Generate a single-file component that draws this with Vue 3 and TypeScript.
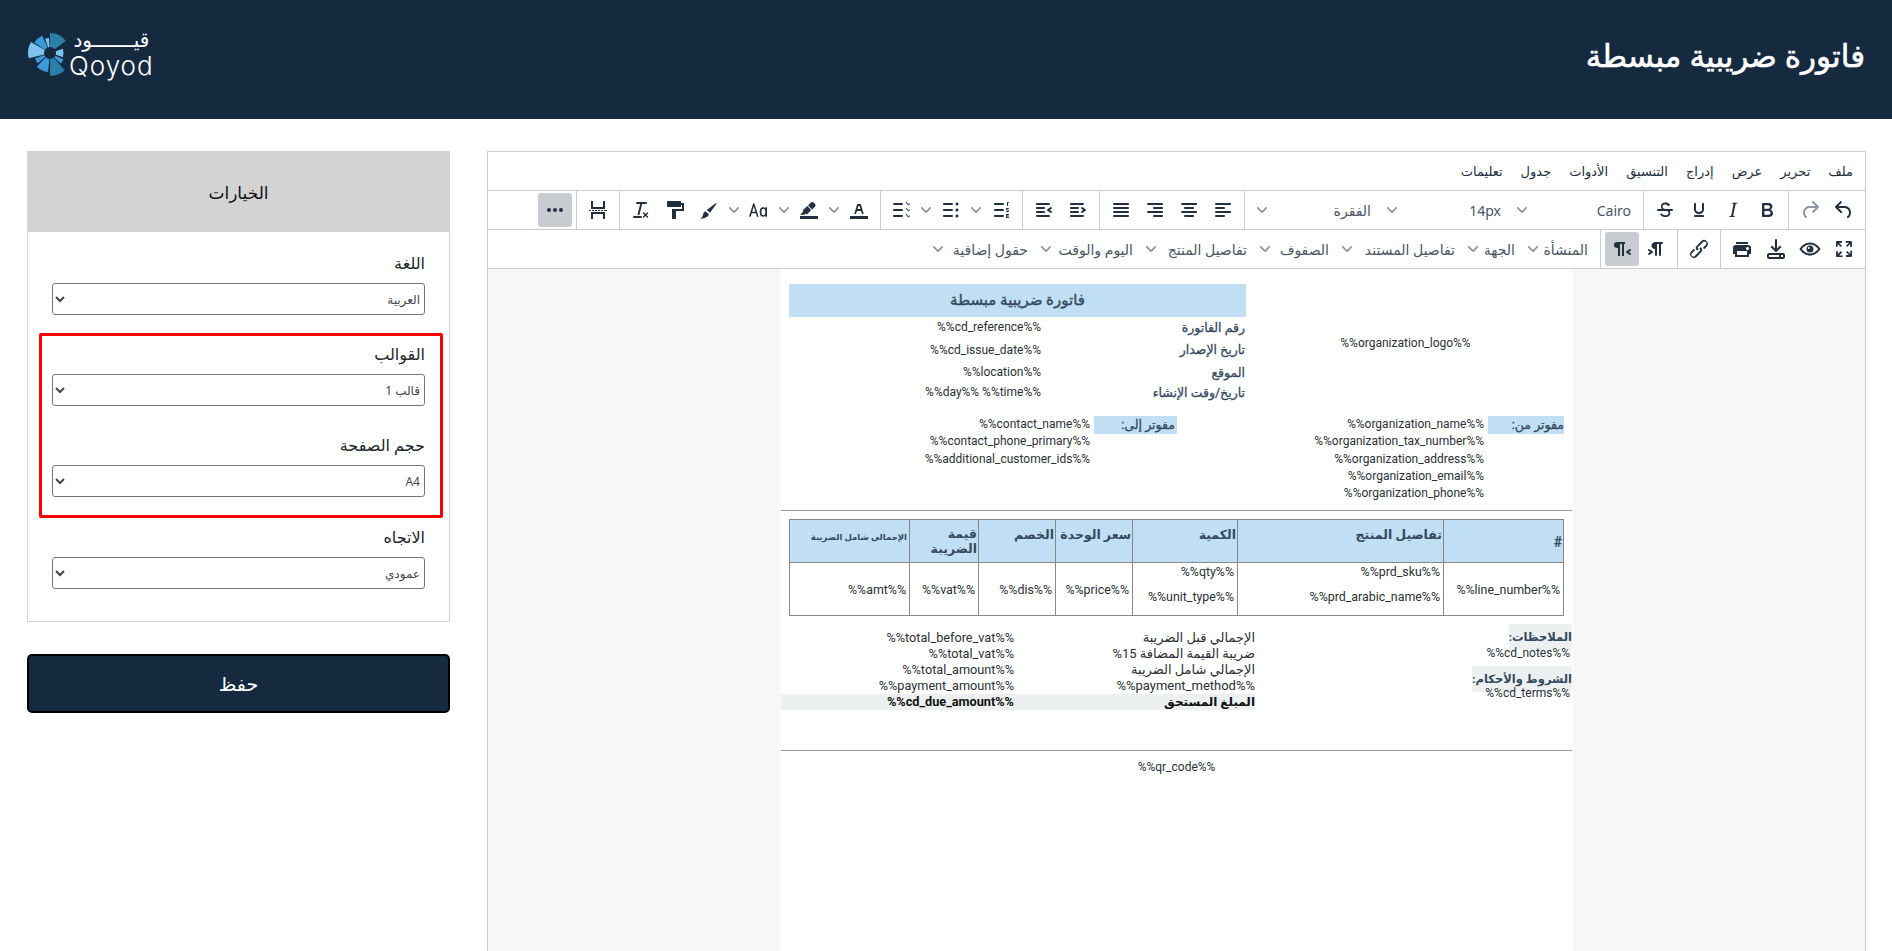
<script setup lang="ts">
interface Tool { icon: string; flip?: boolean; chev?: boolean; off?: boolean; on?: boolean }
const P: Record<string, string> = {
  undo: 'M6.4 8H12c3.7 0 6.2 2 6.8 5.1.6 2.7-.4 5.6-2.3 6.8a1 1 0 0 1-1-1.8c1.1-.6 1.8-2.7 1.4-4.6-.5-2.1-2.1-3.5-4.9-3.5H6.4l3.3 3.3a1 1 0 1 1-1.4 1.4l-5-5a1 1 0 0 1 0-1.4l5-5a1 1 0 0 1 1.4 1.4L6.4 8z',
  redo: 'M17.6 10H12c-2.8 0-4.4 1.4-4.9 3.5-.4 2 .3 4 1.4 4.6a1 1 0 1 1-1 1.8c-2-1.2-2.9-4.1-2.3-6.8.6-3 3-5.1 6.8-5.1h5.6l-3.3-3.3a1 1 0 1 1 1.4-1.4l5 5a1 1 0 0 1 0 1.4l-5 5a1 1 0 0 1-1.4-1.4l3.3-3.3z',
  bold: 'M7.8 19c-.3 0-.5 0-.6-.2l-.2-.5V5.7c0-.2 0-.4.2-.5l.6-.2h5c1.5 0 2.7.3 3.5 1 .7.6 1.1 1.4 1.1 2.5a3 3 0 0 1-.6 1.9c-.4.6-1 1-1.6 1.2.4.1.9.3 1.3.6s.8.7 1 1.2c.4.4.5 1 .5 1.6 0 1.3-.4 2.3-1.3 3-.8.7-2.1 1-3.8 1H7.8zm5-8.3c.6 0 1.2-.1 1.6-.5.4-.3.6-.7.6-1.3 0-1.1-.8-1.7-2.3-1.7H9.3v3.5h3.4zm.5 6c.7 0 1.3-.1 1.7-.4.4-.4.6-.9.6-1.5s-.2-1-.7-1.4c-.4-.3-1-.4-2-.4H9.4v3.8h4z',
  italic: 'M16.7 4.7l-.1.9h-.3c-.6 0-1 0-1.4.3-.3.3-.4.6-.5 1.1l-2.1 9.8v.6c0 .5.4.8 1.4.8h.2l-.2.8H8l.2-.8h.2c1.1 0 1.8-.5 2-1.5l2-9.8.1-.5c0-.6-.4-.8-1.4-.8h-.3l.2-.9h5.8z',
  underline: 'M16 5c.6 0 1 .4 1 1v5.5a4 4 0 0 1-.4 1.8l-1 1.4a5.3 5.3 0 0 1-5.5 1 5 5 0 0 1-1.6-1c-.5-.4-.8-.9-1.1-1.4a4 4 0 0 1-.4-1.8V6c0-.6.4-1 1-1s1 .4 1 1v5.5c0 .3 0 .6.2 1l.6.7a3.3 3.3 0 0 0 2.2.8 3.4 3.4 0 0 0 2.2-.8c.3-.2.4-.5.6-.8l.2-.9V6c0-.6.4-1 1-1zM8 17h8c.6 0 1 .4 1 1s-.4 1-1 1H8a1 1 0 0 1 0-2z',
  strike: 'M15.6 8.5c-.5-.7-1-1.1-1.3-1.3-.6-.4-1.3-.6-2-.6-2.7 0-2.8 1.7-2.8 2.1 0 1.6 1.8 2 3.2 2.3 4.4.9 4.6 2.8 4.6 3.9 0 1.4-.7 4.1-5 4.1A6.2 6.2 0 0 1 7 16.4l1.5-1.1c.4.6 1.6 2 3.7 2 1.6 0 2.5-.4 3-1 .3-.4.4-.9.4-1.5 0-1.6-2-2-3.3-2.3-1.8-.4-4.4-1-4.4-3.9 0-2.4 1.8-4 4.6-4 1.5 0 2.7.5 3.5 1.1.4.3.9.8 1.2 1.3l-1.6 1zM5 11h14a1 1 0 0 1 0 2H5a1 1 0 0 1 0-2z',
  alignLeft: 'M5 5h14c.6 0 1 .4 1 1s-.4 1-1 1H5a1 1 0 1 1 0-2zm0 4h8c.6 0 1 .4 1 1s-.4 1-1 1H5a1 1 0 1 1 0-2zm0 8h8c.6 0 1 .4 1 1s-.4 1-1 1H5a1 1 0 0 1 0-2zm0-4h14c.6 0 1 .4 1 1s-.4 1-1 1H5a1 1 0 0 1 0-2z',
  alignCenter: 'M5 5h14c.6 0 1 .4 1 1s-.4 1-1 1H5a1 1 0 1 1 0-2zm3 4h8c.6 0 1 .4 1 1s-.4 1-1 1H8a1 1 0 1 1 0-2zm0 8h8c.6 0 1 .4 1 1s-.4 1-1 1H8a1 1 0 0 1 0-2zm-3-4h14c.6 0 1 .4 1 1s-.4 1-1 1H5a1 1 0 0 1 0-2z',
  alignRight: 'M5 5h14c.6 0 1 .4 1 1s-.4 1-1 1H5a1 1 0 1 1 0-2zm6 4h8c.6 0 1 .4 1 1s-.4 1-1 1h-8a1 1 0 0 1 0-2zm0 8h8c.6 0 1 .4 1 1s-.4 1-1 1h-8a1 1 0 0 1 0-2zm-6-4h14c.6 0 1 .4 1 1s-.4 1-1 1H5a1 1 0 0 1 0-2z',
  justify: 'M5 5h14c.6 0 1 .4 1 1s-.4 1-1 1H5a1 1 0 1 1 0-2zm0 4h14c.6 0 1 .4 1 1s-.4 1-1 1H5a1 1 0 1 1 0-2zm0 4h14c.6 0 1 .4 1 1s-.4 1-1 1H5a1 1 0 0 1 0-2zm0 4h14c.6 0 1 .4 1 1s-.4 1-1 1H5a1 1 0 0 1 0-2z',
  outdent: 'M7 5h12c.6 0 1 .4 1 1s-.4 1-1 1H7a1 1 0 1 1 0-2zm5 4h7c.6 0 1 .4 1 1s-.4 1-1 1h-7a1 1 0 0 1 0-2zm0 4h7c.6 0 1 .4 1 1s-.4 1-1 1h-7a1 1 0 0 1 0-2zm-5 4h12a1 1 0 0 1 0 2H7a1 1 0 0 1 0-2zm1.6-3.8a1 1 0 0 1-1.2 1.6l-3-2a1 1 0 0 1 0-1.6l3-2a1 1 0 0 1 1.2 1.6L6.8 12l1.8 1.2z',
  indent: 'M7 5h12c.6 0 1 .4 1 1s-.4 1-1 1H7a1 1 0 1 1 0-2zm5 4h7c.6 0 1 .4 1 1s-.4 1-1 1h-7a1 1 0 0 1 0-2zm0 4h7c.6 0 1 .4 1 1s-.4 1-1 1h-7a1 1 0 0 1 0-2zm-5 4h12a1 1 0 0 1 0 2H7a1 1 0 0 1 0-2zm-2.6-3.8L6.2 12l-1.8-1.2a1 1 0 0 1 1.2-1.6l3 2a1 1 0 0 1 0 1.6l-3 2a1 1 0 1 1-1.2-1.6z',
  num: 'M10 17h8c.6 0 1 .4 1 1s-.4 1-1 1h-8a1 1 0 0 1 0-2zm0-6h8c.6 0 1 .4 1 1s-.4 1-1 1h-8a1 1 0 0 1 0-2zm0-6h8c.6 0 1 .4 1 1s-.4 1-1 1h-8a1 1 0 1 1 0-2zM6 4v3.5c0 .3-.2.5-.5.5a.5.5 0 0 1-.5-.5V5h-.5a.5.5 0 0 1 0-1H6zm-1 8.8l.2.2h1.3c.3 0 .5.2.5.5s-.2.5-.5.5H4.9a1 1 0 0 1-.9-1V13c0-.4.3-.8.6-1l1.2-.4.2-.3a.2.2 0 0 0-.2-.2H4.5a.5.5 0 0 1-.5-.5c0-.3.2-.5.5-.5h1.6c.5 0 .9.4.9 1v.1c0 .4-.3.8-.6 1l-1.2.4-.2.3zM7 17v2c0 .6-.4 1-1 1H4.5a.5.5 0 0 1 0-1h1.2c.2 0 .3-.1.3-.3 0-.2-.1-.3-.3-.3H4.4a.4.4 0 1 1 0-.8h1.3c.2 0 .3-.1.3-.3 0-.2-.1-.3-.3-.3H4.5a.5.5 0 1 1 0-1H6c.6 0 1 .4 1 1z',
  bull: 'M11 5h8c.6 0 1 .4 1 1s-.4 1-1 1h-8a1 1 0 0 1 0-2zm0 6h8c.6 0 1 .4 1 1s-.4 1-1 1h-8a1 1 0 0 1 0-2zm0 6h8c.6 0 1 .4 1 1s-.4 1-1 1h-8a1 1 0 0 1 0-2zM4.5 6c0-.4.1-.8.4-1 .3-.4.7-.5 1.1-.5.4 0 .8.1 1 .4.4.3.5.7.5 1.1 0 .4-.1.8-.4 1-.3.4-.7.5-1.1.5-.4 0-.8-.1-1-.4-.4-.3-.5-.7-.5-1.1zm0 6c0-.4.1-.8.4-1 .3-.4.7-.5 1.1-.5.4 0 .8.1 1 .4.4.3.5.7.5 1.1 0 .4-.1.8-.4 1-.3.4-.7.5-1.1.5-.4 0-.8-.1-1-.4-.4-.3-.5-.7-.5-1.1zm0 6c0-.4.1-.8.4-1 .3-.4.7-.5 1.1-.5.4 0 .8.1 1 .4.4.3.5.7.5 1.1 0 .4-.1.8-.4 1-.3.4-.7.5-1.1.5-.4 0-.8-.1-1-.4-.4-.3-.5-.7-.5-1.1z',
  check: 'M11 17h8c.6 0 1 .4 1 1s-.4 1-1 1h-8a1 1 0 0 1 0-2zm0-6h8c.6 0 1 .4 1 1s-.4 1-1 1h-8a1 1 0 0 1 0-2zm0-6h8a1 1 0 0 1 0 2h-8a1 1 0 0 1 0-2zM3.6 5.3l1 1 2.2-2.5.6.6-2.8 3.1-1.6-1.6zm0 6l1 1 2.2-2.5.6.6-2.8 3.1-1.6-1.6zm0 6l1 1 2.2-2.5.6.6-2.8 3.1-1.6-1.6z',
  textColor: 'M3 18h18v3H3zM8.7 16h-.8a.5.5 0 0 1-.5-.6l2.7-9c.1-.3.3-.4.5-.4h2.8c.2 0 .4.1.5.4l2.7 9a.5.5 0 0 1-.5.6h-.8a.5.5 0 0 1-.4-.4l-.7-2.2c0-.3-.3-.4-.5-.4h-3.4c-.2 0-.4.1-.5.4l-.7 2.2c0 .3-.2.4-.4.4zm2.6-7.6l-.6 2a.5.5 0 0 0 .5.6h1.6a.5.5 0 0 0 .5-.6l-.6-2c0-.3-.3-.4-.5-.4h-.4c-.2 0-.4.1-.5.4z',
  highlight: 'M3 18h18v3H3zM7.7 16.7H3l3.3-3.3-.7-.8L10.2 8l4 4.1-4 4.2c-.2.2-.6.2-.8 0l-.6-.7-1.1 1.1zm5-7.5L11 7.4l3-2.9a2 2 0 0 1 2.6 0L18 6c.7.7.7 2 0 2.7l-2.9 2.9-1.8-1.8-.5-.6',
  aa: 'M18.4 18.2v-.6c-.5.8-1.3 1.2-2.4 1.2-2.2 0-3.3-1.6-3.3-4.8 0-3.1 1-4.7 3.3-4.7 1.1 0 1.8.3 2.4 1.1v-.6c0-.5.4-.8.8-.8s.8.3.8.8v8.4c0 .5-.4.8-.8.8a.8.8 0 0 1-.8-.8zm-2-7.4c-1.3 0-1.9 1.1-1.9 3.2 0 2.2.6 3.3 1.9 3.3 1.3 0 1.9-1.1 1.9-3.3 0-2.1-.6-3.2-1.9-3.2zM11.5 18.2a.8.8 0 0 1-1.6.2l-1-3.1H4.7l-1 3.1a.8.8 0 0 1-1.5-.5L6 5.9c.1-.5.5-.7.8-.7s.7.2.8.7l3.8 12.3zM8.4 13.7L6.8 8.3l-1.6 5.4h3.2z',
  brush: 'M3 20.6c1.9-.7 2.5-1.8 2.9-3.3.4-1.5.8-3.1 2.6-4l3.4 3c-.6 2.4-4 4.6-8.9 4.3zM13 14.8l-3.2-2.7 9.2-7.2.7.7-6.7 9.2z',
  painter: 'M18 5V4c0-.5-.4-1-1-1H5a1 1 0 0 0-1 1v4c0 .6.5 1 1 1h12c.6 0 1-.4 1-1V7h1v4H9v9c0 .6.4 1 1 1h2c.6 0 1-.4 1-1v-7h8V5h-3z',
  clear: 'M13.2 6l-2.6 10.2a1 1 0 0 1-1 .8h-.2a.8.8 0 0 1-.8-1l2.6-10H8a1 1 0 1 1 0-2h9a1 1 0 0 1 0 2h-3.8zM5 18h7a1 1 0 0 1 0 2H5a1 1 0 0 1 0-2zm13 1.5L16.5 18 15 19.5a.7.7 0 0 1-1-1l1.5-1.5-1.5-1.5a.7.7 0 0 1 1-1l1.5 1.5 1.5-1.5a.7.7 0 0 1 1 1L17.5 17l1.5 1.5a.7.7 0 0 1-1 1z',
  pageBreak: 'M5 3h2v6h10V3h2v8H5V3zM5 21v-7h14v7h-2v-5H7v5H5zM3 12h2v1H3zm3 0h2v1H6zm3 0h2v1H9zm3 0h2v1h-2zm3 0h2v1h-2zm3 0h3v1h-3z',
  more: 'M6 10a2 2 0 0 0-2 2c0 1.1.9 2 2 2a2 2 0 0 0 2-2 2 2 0 0 0-2-2zm12 0a2 2 0 0 0-2 2c0 1.1.9 2 2 2a2 2 0 0 0 2-2 2 2 0 0 0-2-2zm-6 0a2 2 0 0 0-2 2c0 1.1.9 2 2 2a2 2 0 0 0 2-2 2 2 0 0 0-2-2z',
  full: 'M15.3 10l-1.2-1.3 2.9-3h-2.3a.9.9 0 1 1 0-1.7H19c.5 0 .9.4.9.9v4.4a.9.9 0 1 1-1.8 0V7l-2.9 3zm0 4l3 3v-2.3a.9.9 0 1 1 1.7 0V19c0 .5-.4.9-.9.9h-4.4a.9.9 0 1 1 0-1.8H17l-3-2.9 1.3-1.2zM10 15.4l-2.9 3h2.3a.9.9 0 1 1 0 1.7H5a.9.9 0 0 1-.9-.9v-4.4a.9.9 0 1 1 1.8 0V17l2.9-3 1.2 1.3zM8.7 10L5.7 7v2.3a.9.9 0 0 1-1.7 0V5c0-.5.4-.9.9-.9h4.4a.9.9 0 0 1 0 1.8H7l3 2.9-1.3 1.2z',
  eye: 'M12 5.5c4.4 0 8.2 2.9 10.6 6.5-2.4 3.6-6.2 6.5-10.6 6.5S3.8 15.6 1.4 12C3.8 8.4 7.6 5.5 12 5.5zm0 2c-3.3 0-6.2 1.9-8.2 4.5 2 2.6 4.9 4.5 8.2 4.5s6.2-1.9 8.2-4.5c-2-2.6-4.9-4.5-8.2-4.5zm0 1a3.5 3.5 0 1 1 0 7 3.5 3.5 0 0 1 0-7zm-1.2 1.4a1 1 0 1 0 0 2 1 1 0 0 0 0-2z',
  save: 'M5 16h14a2 2 0 0 1 2 2v2a2 2 0 0 1-2 2H5a2 2 0 0 1-2-2v-2c0-1.1.9-2 2-2zm0 2v2h14v-2H5zm10 0h2v2h-2v-2zm-4-6.4L8.7 9.3a1 1 0 1 0-1.4 1.4l4 4c.4.4 1 .4 1.4 0l4-4a1 1 0 1 0-1.4-1.4L13 11.6V3a1 1 0 0 0-2 0v8.6z',
  print: 'M18 8H6a3 3 0 0 0-3 3v6h2v3h14v-3h2v-6a3 3 0 0 0-3-3zm-1 10H7v-4h10v4zm.5-5c-.8 0-1.5-.7-1.5-1.5s.7-1.5 1.5-1.5 1.5.7 1.5 1.5-.7 1.5-1.5 1.5zm.5-8H6v2h12V5z',
  link: 'M6.2 12.3a1 1 0 0 1 1.4 1.4l-2.1 2.1a2 2 0 1 0 2.7 2.7l4.8-4.8a1 1 0 0 0 0-1.4 1 1 0 1 1 1.4-1.3 2.9 2.9 0 0 1 0 4L9.6 20a3.9 3.9 0 0 1-5.5-5.5l2-2zm11.6-.6a1 1 0 0 1-1.4-1.4l2-2a2 2 0 1 0-2.6-2.8L11 10a1 1 0 0 0 0 1.4A1 1 0 1 1 9.6 13a2.9 2.9 0 0 1 0-4L14.4 4a3.9 3.9 0 0 1 5.5 5.5l-2 2z',
  ltr: 'M11 5h7a1 1 0 0 1 0 2h-1v11a1 1 0 0 1-2 0V7h-2v11a1 1 0 0 1-2 0v-6c-.5 0-1 0-1.4-.3A3.4 3.4 0 0 1 7.8 10a3.3 3.3 0 0 1 0-2.8 3.4 3.4 0 0 1 1.8-1.8L11 5zM4.4 16.2L6.2 15l-1.8-1.2a1 1 0 0 1 1.2-1.6l3 2a1 1 0 0 1 0 1.6l-3 2a1 1 0 1 1-1.2-1.6z',
  rtl: 'M7 5h8v2h-1v12h-2V7h-2v12H8v-8H7a3 3 0 1 1 0-6zM20.6 13.8L18.8 15l1.8 1.2a1 1 0 0 1-1.2 1.6l-3-2a1 1 0 0 1 0-1.6l3-2a1 1 0 0 1 1.2 1.6z',
}
const chevron = 'M8.7 2.2c.3-.3.8-.3 1 0 .4.4.4.9 0 1.2L5.7 7.8c-.3.3-.9.3-1.2 0L.2 3.4a.8.8 0 0 1 0-1.2c.3-.3.8-.3 1.1 0L5 6l3.7-3.8z'

const menu = ['ملف', 'تحرير', 'عرض', 'إدراج', 'التنسيق', 'الأدوات', 'جدول', 'تعليمات']
const history: Tool[] = [{ icon: 'undo' }, { icon: 'redo', off: true }]
const marks: Tool[] = [{ icon: 'bold' }, { icon: 'italic' }, { icon: 'underline' }, { icon: 'strike' }]
const selects = ['Cairo', '14px', 'الفقرة']
const aligns: Tool[] = [{ icon: 'alignLeft' }, { icon: 'alignCenter' }, { icon: 'alignRight' }, { icon: 'justify' }]
const indents: Tool[] = [{ icon: 'outdent', flip: true }, { icon: 'indent', flip: true }]
const lists: Tool[] = [{ icon: 'num', flip: true, chev: true }, { icon: 'bull', flip: true, chev: true }, { icon: 'check', flip: true }]
const styles: Tool[] = [
  { icon: 'textColor', chev: true }, { icon: 'highlight', chev: true }, { icon: 'aa', chev: true },
  { icon: 'brush' }, { icon: 'painter' }, { icon: 'clear' },
]
const row1: Tool[][] = [aligns, indents, lists, styles, [{ icon: 'pageBreak' }], [{ icon: 'more', on: true }]]
const row2: Tool[][] = [
  [{ icon: 'full' }, { icon: 'eye' }, { icon: 'save' }, { icon: 'print' }],
  [{ icon: 'link' }],
  [{ icon: 'ltr' }, { icon: 'rtl', on: true }],
]
const fields = [
  { text: 'المنشأة', w: 73 }, { text: 'الجهة', w: 60 }, { text: 'تفاصيل المستند', w: 126 }, { text: 'الصفوف', w: 82 },
  { text: 'تفاصيل المنتج', w: 114 }, { text: 'اليوم والوقت', w: 105 }, { text: 'حقول إضافية', w: 108 },
]

const meta = [
  ['رقم الفاتورة', '%%cd_reference%%'],
  ['تاريخ الإصدار', '%%cd_issue_date%%'],
  ['الموقع', '%%location%%'],
  ['تاريخ/وقت الإنشاء', '%%day%% %%time%%'],
]
const fromRows = ['%%organization_name%%', '%%organization_tax_number%%', '%%organization_address%%', '%%organization_email%%', '%%organization_phone%%']
const toRows = ['%%contact_name%%', '%%contact_phone_primary%%', '%%additional_customer_ids%%']
const totals = [
  ['الإجمالي قبل الضريبة', '%%total_before_vat%%'],
  ['ضريبة القيمة المضافة 15%', '%%total_vat%%'],
  ['الإجمالي شامل الضريبة', '%%total_amount%%'],
  ['%%payment_method%%', '%%payment_amount%%'],
]

function wedge(a: number, b: number, r: number, r0: number): string {
  const pt = (deg: number, rad: number) => {
    const t = ((deg - 90) * Math.PI) / 180
    return `${(24 + rad * Math.cos(t)).toFixed(2)} ${(24 + rad * Math.sin(t)).toFixed(2)}`
  }
  return `M${pt(a, r0)}L${pt(a, r)}A${r} ${r} 0 0 1 ${pt(b, r)}L${pt(b, r0)}A${r0} ${r0} 0 0 0 ${pt(a, r0)}Z`
}
const wedges = [
  { d: wedge(0, 52, 20, 6), c: '#2a7fa8' },
  { d: wedge(72, 108, 13.5, 6), c: '#7cc4ee' },
  { d: wedge(116, 134, 15, 6), c: '#3b9bd9' },
  { d: wedge(140, 180, 23, 6), c: '#2a7fa8' },
  { d: wedge(186, 224, 19, 6), c: '#3b9bd9' },
  { d: wedge(230, 250, 16, 6), c: '#3b9bd9' },
  { d: wedge(256, 300, 22, 6), c: '#7cc4ee' },
  { d: wedge(304, 336, 19, 6), c: '#3b9bd9' },
  { d: wedge(341, 356, 15, 6), c: '#7cc4ee' },
]
</script>

<template>
  <div class="app" dir="rtl">
    <header class="top">
      <h1 class="page-title">فاتورة ضريبية مبسطة</h1>
      <div class="logo" dir="ltr">
        <svg class="logo-mark" viewBox="0 0 48 48" width="48" height="48">
          <path v-for="(w, i) in wedges" :key="i" :d="w.d" :fill="w.c" />
        </svg>
        <div class="logo-text">
          <span class="logo-ar" dir="rtl">قيـــــــود</span>
          <span class="logo-en">Qoyod</span>
        </div>
      </div>
    </header>

    <main class="body">
      <section class="editor">
        <nav class="menubar">
          <span v-for="m in menu" :key="m" class="menu-item">{{ m }}</span>
        </nav>

        <div class="toolbar">
          <div class="group">
            <button v-for="t in history" :key="t.icon" class="tbtn" type="button">
              <svg viewBox="0 0 24 24" :class="{ off: t.off }"><path :d="P[t.icon]" /></svg>
            </button>
          </div>
          <div class="group">
            <button v-for="t in marks" :key="t.icon" class="tbtn" type="button">
              <svg viewBox="0 0 24 24"><path :d="P[t.icon]" /></svg>
            </button>
          </div>
          <div class="group">
            <div v-for="s in selects" :key="s" class="tselect">
              <span class="tselect-label">{{ s }}</span>
              <svg class="chev" viewBox="0 0 10 10"><path :d="chevron" /></svg>
            </div>
          </div>
          <div v-for="(g, gi) in row1" :key="gi" class="group group-tight">
            <template v-for="t in g" :key="t.icon">
              <button class="tbtn" :class="{ on: t.on }" type="button">
                <svg viewBox="0 0 24 24" :class="{ flip: t.flip }"><path fill-rule="evenodd" :d="P[t.icon]" /></svg>
              </button>
              <span v-if="t.chev" class="tchev">
                <svg class="chev" viewBox="0 0 10 10"><path :d="chevron" /></svg>
              </span>
            </template>
          </div>
        </div>

        <div class="toolbar">
          <div v-for="(g, gi) in row2" :key="gi" class="group">
            <button v-for="t in g" :key="t.icon" class="tbtn" :class="{ on: t.on }" type="button">
              <svg viewBox="0 0 24 24"><path fill-rule="evenodd" :d="P[t.icon]" /></svg>
            </button>
          </div>
          <div class="group group-plain">
            <div v-for="f in fields" :key="f.text" class="tmenu" :style="{ width: f.w + 'px' }">
              <span>{{ f.text }}</span>
              <svg class="chev" viewBox="0 0 10 10"><path :d="chevron" /></svg>
            </div>
          </div>
        </div>

        <div class="doc">
          <article class="sheet">
            <div class="head">
              <div class="org-logo">%%organization_logo%%</div>
              <div class="head-main">
                <div class="doc-title">فاتورة ضريبية مبسطة</div>
                <div class="meta">
                  <template v-for="r in meta" :key="r[0]">
                    <span class="meta-label">{{ r[0] }}</span>
                    <span class="meta-value" dir="ltr">{{ r[1] }}</span>
                  </template>
                </div>
              </div>
            </div>

            <div class="parties">
              <div class="party party-from">
                <span class="party-label">مفوتر من:</span>
                <div class="party-rows">
                  <div v-for="r in fromRows" :key="r">{{ r }}</div>
                </div>
              </div>
              <div class="party party-to">
                <span class="party-label party-label-to">مفوتر إلى:</span>
                <div class="party-rows">
                  <div v-for="r in toRows" :key="r">{{ r }}</div>
                </div>
              </div>
            </div>

            <hr class="rule" />

            <table class="lines">
              <colgroup>
                <col class="c1" /><col class="c2" /><col class="c3" /><col class="c4" />
                <col class="c5" /><col class="c6" /><col class="c7" />
              </colgroup>
              <thead>
                <tr>
                  <th class="hash">#</th>
                  <th class="up">تفاصيل المنتج</th>
                  <th class="up">الكمية</th>
                  <th class="up">سعر الوحدة</th>
                  <th class="up">الخصم</th>
                  <th class="two">قيمة الضريبة</th>
                  <th class="tiny">الإجمالي شامل الضريبة</th>
                </tr>
              </thead>
              <tbody>
                <tr>
                  <td>%%line_number%%</td>
                  <td class="stack"><p>%%prd_sku%%</p><p>%%prd_arabic_name%%</p></td>
                  <td class="stack"><p>%%qty%%</p><p>%%unit_type%%</p></td>
                  <td>%%price%%</td>
                  <td>%%dis%%</td>
                  <td>%%vat%%</td>
                  <td>%%amt%%</td>
                </tr>
              </tbody>
            </table>

            <div class="foot">
              <div class="notes">
                <div class="note-label">الملاحظات:</div>
                <div class="note-value">%%cd_notes%%</div>
                <div class="note-label note-label-2">الشروط والأحكام:</div>
                <div class="note-value note-value-2">%%cd_terms%%</div>
              </div>
              <div class="totals">
                <div v-for="r in totals" :key="r[1]" class="total-row">
                  <span class="total-label">{{ r[0] }}</span>
                  <span class="total-value">{{ r[1] }}</span>
                </div>
                <div class="total-row total-due">
                  <span class="total-label">المبلغ المستحق</span>
                  <span class="total-value">%%cd_due_amount%%</span>
                </div>
              </div>
            </div>

            <hr class="rule rule-2" />
            <div class="qr">%%qr_code%%</div>
          </article>
        </div>
      </section>

      <aside class="side">
        <div class="card">
          <div class="card-head">الخيارات</div>
          <div class="card-body">
            <label class="field">
              <span class="field-label">اللغة</span>
              <select class="input"><option>العربية</option></select>
            </label>
            <div class="marked">
              <label class="field">
                <span class="field-label">القوالب</span>
                <select class="input"><option>قالب 1</option></select>
              </label>
              <label class="field field-next">
                <span class="field-label">حجم الصفحة</span>
                <select class="input"><option>A4</option></select>
              </label>
            </div>
            <label class="field field-last">
              <span class="field-label">الاتجاه</span>
              <select class="input"><option>عمودي</option></select>
            </label>
          </div>
        </div>
        <button class="save" type="button">حفظ</button>
      </aside>
    </main>
  </div>
</template>

<style>
html, body { margin: 0; background: #fff; }
</style>

<style scoped>
.app {
  height: 100vh;
  overflow: hidden;
  display: flex;
  flex-direction: column;
  font-family: "Noto Sans", "DejaVu Sans", sans-serif;
  color: #212529;
}
.top {
  height: 119px;
  flex: none;
  background: #162a3f;
  display: flex;
  align-items: flex-start;
  justify-content: space-between;
  padding: 0 27px 0 26px;
}
.page-title { margin: 35px 0 0; font-size: 31px; line-height: 40px; font-weight: 400; -webkit-text-stroke: .6px #fff; color: #fff; }
.logo { display: flex; align-items: center; margin-top: 27px; }
.logo-mark { display: block; }
.logo-text { display: flex; flex-direction: column; align-items: stretch; color: #fff; margin-left: -5px; }
.logo-ar { font-size: 20px; line-height: 26px; height: 26px; text-align: center; white-space: nowrap; overflow: hidden; }
.logo-en { font-family: "Inter", sans-serif; font-size: 26px; line-height: 26px; height: 26px; letter-spacing: 1px; font-weight: 300; }

.body {
  flex: 1;
  min-height: 0;
  display: grid;
  grid-template-columns: 1fr 423px;
  gap: 37px;
  padding: 32px 26px 0 27px;
}

/* editor */
.editor { display: flex; flex-direction: column; min-width: 0; min-height: 0; border: 1px solid #ccc; border-bottom: 0; }
.menubar { height: 38px; flex: none; display: flex; align-items: center; gap: 18px; padding: 0 12px; border-bottom: 1px solid #ccc; font-size: 13px; color: #222f3e; }
.menu-item { white-space: nowrap; }
.toolbar { height: 38px; flex: none; display: flex; align-items: stretch; border-bottom: 1px solid #ccc; }
.group { display: flex; align-items: center; padding: 0 4px; border-left: 1px solid #ccc; }
.group-tight:nth-child(6) { padding-left: 3px; }
.toolbar .group:last-child { border-left: 0; }
.tbtn { width: 34px; height: 34px; padding: 0; border: 0; border-radius: 3px; background: none; display: flex; align-items: center; justify-content: center; }
.tbtn svg { width: 24px; height: 24px; fill: #222f3e; display: block; }
.tbtn svg.off { fill: rgba(34, 47, 62, .5); }
.tbtn svg.flip { transform: scaleX(-1); }
.tbtn.on { background: #c8cbcf; }
.tchev { width: 16px; height: 34px; display: flex; align-items: center; justify-content: center; }
.chev { width: 10px; height: 10px; fill: #8a9099; flex: none; display: block; }
.tselect { width: 130px; height: 34px; box-sizing: border-box; display: flex; align-items: center; justify-content: space-between; padding: 0 8px; font-size: 14px; color: #4b5563; }
.tselect-label { white-space: nowrap; }
.tmenu { height: 34px; box-sizing: border-box; display: flex; align-items: center; justify-content: space-between; padding: 0 8px 0 5px; font-size: 14px; color: #4b5563; white-space: nowrap; }

.doc { flex: 1; min-height: 0; background: #f7f7f7; display: flex; justify-content: center; overflow: hidden; }
.sheet { width: 793px; flex: none; background: #fff; font-family: "Roboto", "DejaVu Sans", sans-serif; font-size: 12px; color: #2b2f36; padding-top: 15px; box-sizing: border-box; }

.head { display: grid; grid-template-columns: 327px 457px; }
.org-logo { text-align: center; padding: 51px 8px 0 0; line-height: 16px; }
.doc-title { height: 33px; line-height: 33px; background: #c0dff4; text-align: center; font-size: 15px; font-weight: 400; -webkit-text-stroke: .4px #34495e; color: #34495e; }
.meta { display: grid; grid-template-columns: 205px 1fr; grid-template-rows: 22px 23px 22px 18px; align-items: center; margin-top: -1px; }
.meta-label { font-size: 12.5px; font-weight: 400; -webkit-text-stroke: .3px #34495e; color: #34495e; padding-right: 1px; white-space: nowrap; }
.meta-value { text-align: right; white-space: pre; }

.parties { display: flex; padding: 16px 9px 0 0; height: 110px; box-sizing: border-box; margin-top: -1px; }
.party { display: flex; gap: 4px; align-items: flex-start; }
.party-from { width: 387px; flex: none; }
.party-label { width: 76px; height: 18px; line-height: 18px; background: #c0dff4; font-size: 12.5px; -webkit-text-stroke: .3px #34495e; color: #34495e; box-sizing: border-box; }
.party-label-to { width: 83px; padding-right: 2px; }
.party-rows { line-height: 17.25px; text-align: right; }
.party-rows div { direction: ltr; text-align: right; }

.rule { height: 1px; margin: 0 1px; border: 0; background: #999; }
.lines { table-layout: fixed; width: 774px; margin: 8px 9px 0 0; border-collapse: collapse; font-size: 12.4px; }
.c1 { width: 120px; } .c2 { width: 206px; } .c3 { width: 105px; } .c4 { width: 77px; } .c5 { width: 77px; } .c6 { width: 69px; } .c7 { width: 120px; }
.lines th, .lines td { box-sizing: border-box; border: 1px solid #888; padding: 0 3px; text-align: right; font-weight: 400; }
.lines th { height: 43px; background: #c0dff4; color: #34495e; font-weight: 700; font-size: 12.5px; line-height: 14px; padding-right: 1px; }
.lines th.up { vertical-align: top; padding-top: 8px; }
.lines th.two { line-height: 15px; }
.lines th.hash { vertical-align: middle; padding-top: 2px; font-size: 14px; }
.lines th.tiny { font-size: 8.5px; vertical-align: top; padding-top: 10px; padding-right: 2px; white-space: nowrap; }
.lines td { height: 53px; direction: ltr; }
.lines td.stack { vertical-align: top; }
.stack p { margin: 0; height: 17px; line-height: 17px; }
.stack p + p { margin-top: 8px; }

.foot { display: flex; justify-content: space-between; align-items: flex-start; padding-top: 8px; height: 95px; box-sizing: border-box; }
.notes { width: 92px; display: flex; flex-direction: column; align-items: flex-start; padding-right: 1px; }
.note-label { height: 26px; line-height: 26px; background: #ecf0f1; font-size: 11.5px; font-weight: 700; color: #34495e; white-space: nowrap; }
.note-value { direction: ltr; text-align: right; width: 90px; line-height: 16px; margin-top: -5px; padding-right: 2px; box-sizing: border-box; }
.note-label-2 { margin-top: 5px; }
.note-value-2 { margin-top: -7px; }
.totals { width: 474px; padding-top: 6px; margin-left: 1px; }
.total-row { display: grid; grid-template-columns: 241px 1fr; height: 16px; line-height: 16px; padding: 0; }
.total-label { white-space: nowrap; font-size: 13px; }
.total-value { direction: ltr; text-align: right; font-size: 12.7px; }
.total-due { background: #ecf0f1; font-weight: 700; color: #111; }
.total-due .total-label { font-size: 12px; }

.rule-2 { margin-top: 39px; }
.qr { text-align: center; direction: ltr; margin-top: 8px; line-height: 16px; }

/* side */
.side { display: flex; flex-direction: column; gap: 32px; }
.card { border: 1px solid #d3d3d3; }
.card-head { height: 80px; line-height: 82px; background: #d3d3d3; text-align: center; font-size: 17px; font-weight: 500; color: #111; }
.card-body { padding: 19px 24px 32px; }
.field { display: block; }
.field-label { display: block; height: 24px; line-height: 24px; margin-bottom: 8px; font-size: 16px; color: #212529; }
.input { display: block; width: 100%; height: 32px; box-sizing: border-box; border: 1px solid #767676; border-radius: 3px; background: #fff; font-family: inherit; font-size: 12px; color: #3f4650; padding: 0; }
.marked { margin: 18px -18px 0 -13px; padding: 6px 15px 18px 10px; border: 3px solid #f00; border-radius: 2px; }
.field-next { margin-top: 27px; }
.field-last { margin-top: 7px; }
.save { height: 59px; box-sizing: border-box; background: #162a3f; border: 2px solid #000; border-radius: 5px; color: #fff; font-family: inherit; font-size: 19px; cursor: pointer; }
</style>
